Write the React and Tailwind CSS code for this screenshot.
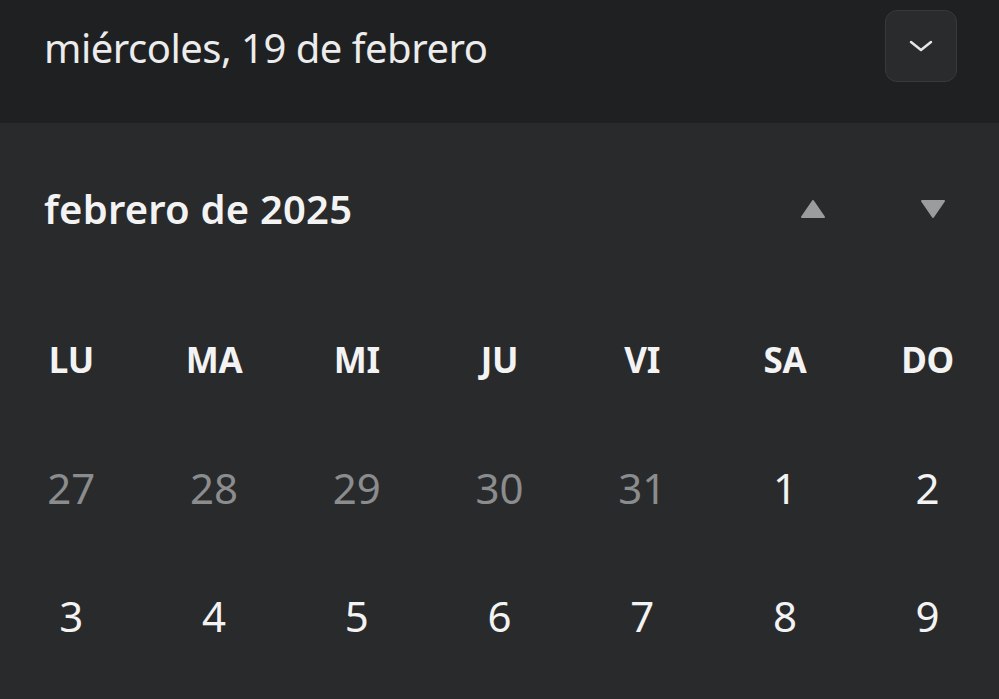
import React from 'react';

const weekdays = ['LU', 'MA', 'MI', 'JU', 'VI', 'SA', 'DO'];

const rows = [
  [
    { d: 27, muted: true },
    { d: 28, muted: true },
    { d: 29, muted: true },
    { d: 30, muted: true },
    { d: 31, muted: true },
    { d: 1 },
    { d: 2 },
  ],
  [{ d: 3 }, { d: 4 }, { d: 5 }, { d: 6 }, { d: 7 }, { d: 8 }, { d: 9 }],
];

function Triangle({ up }) {
  return (
    <svg width="26" height="20" viewBox="0 0 26 20">
      <path
        d={up ? 'M13 2 L24 18 L2 18 Z' : 'M2 2 L24 2 L13 18 Z'}
        fill="#9b9c9e"
        stroke="#9b9c9e"
        strokeWidth="2"
        strokeLinejoin="round"
      />
    </svg>
  );
}

export default function App() {
  return (
    <main
      className="w-[999px] h-[699px] overflow-hidden bg-[#292a2c] text-[#f3f3f3]"
      style={{ fontFamily: '"Noto Sans", "Open Sans", sans-serif' }}
    >
      <header className="h-[123px] bg-[#1f2022] flex items-center justify-between pl-[44px] pr-[42px] pb-[32px]">
        <span className="text-[40px] leading-none tracking-[-0.5px] text-[#ececec] mt-[5px]">
          miércoles, 19 de febrero
        </span>
        <button className="w-[72px] h-[72px] rounded-[12px] bg-[#2a2b2d] border border-[#38393b] flex items-center justify-center">
          <svg width="26" height="14" viewBox="0 0 26 14">
            <path d="M3 3 L13 11 L23 3" fill="none" stroke="#e6e6e6" strokeWidth="2.5" strokeLinecap="round" strokeLinejoin="round" />
          </svg>
        </button>
      </header>

      <section className="h-[172px] flex items-center justify-between pl-[44px] pr-[53px]">
        <span className="text-[40px] font-semibold leading-none tracking-[0.2px]">febrero de 2025</span>
        <div className="flex items-center gap-[94px]">
          <Triangle up />
          <Triangle />
        </div>
      </section>

      <div className="grid grid-cols-7 h-[128px] items-center">
        {weekdays.map((w) => (
          <div key={w} className="text-center text-[35px] font-bold leading-none tracking-[-0.3px]">
            {w}
          </div>
        ))}
      </div>

      {rows.map((row, i) => (
        <div key={i} className="grid grid-cols-7 h-[128px] items-center pt-[1px]">
          {row.map((c) => (
            <div
              key={c.d}
              className={
                'text-center text-[42px] leading-none ' +
                (c.muted ? 'text-[#8b8c8e]' : 'text-[#f3f3f3]')
              }
            >
              {c.d}
            </div>
          ))}
        </div>
      ))}
    </main>
  );
}
